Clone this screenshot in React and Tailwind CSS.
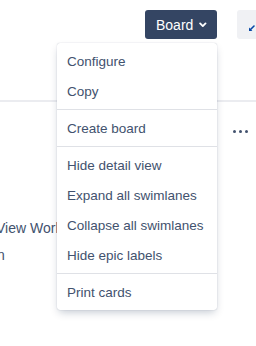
import React from "react";

const groups = [
  ["Configure", "Copy"],
  ["Create board"],
  ["Hide detail view", "Expand all swimlanes", "Collapse all swimlanes", "Hide epic labels"],
  ["Print cards"],
];

export default function App() {
  return (
    <div
      className="relative w-[256px] h-[346px] overflow-hidden bg-white text-[#42526e]"
      style={{ fontFamily: '"Liberation Sans", Arial, sans-serif' }}
    >
      <div className="flex items-start pt-[10px] pl-[145px]">
        <button className="flex items-center shrink-0 w-[72px] h-[29px] rounded-[3px] bg-[#344563] pl-[11px] pr-[10px] pt-[1px] text-white text-[14px]">
          <span className="leading-none">Board</span>
          <svg className="ml-[6px]" width="10" height="8" viewBox="0 0 10 8">
            <path d="M1.5 2 L5 5.5 L8.5 2" fill="none" stroke="white" strokeWidth="2.4" strokeLinecap="round" strokeLinejoin="round" />
          </svg>
        </button>
        <div className="ml-[20px] shrink-0 w-[32px] h-[29px] rounded-[3px] bg-[#f0f1f4] pl-[11px] pt-[15px]">
          <svg width="7" height="7" viewBox="0 0 7 7">
            <path d="M6 1 L1.8 5.2" stroke="#0747a6" strokeWidth="1.6" strokeLinecap="round" />
            <path d="M1 2.6 L1 6 L4.4 6 Z" fill="#0747a6" />
          </svg>
        </div>
      </div>

      <div className="mt-[61px] border-t-2 border-[#ebecf0]" />

      <div className="flex justify-end gap-[3px] pr-[8px] mt-[28px]">
        <span className="w-[3px] h-[3px] rounded-full bg-[#42526e]" />
        <span className="w-[3px] h-[3px] rounded-full bg-[#42526e]" />
        <span className="w-[3px] h-[3px] rounded-full bg-[#42526e]" />
      </div>

      <div className="mt-[87px] w-[57px] overflow-hidden">
        <div className="-ml-[4px] text-[14px] leading-[16px] whitespace-nowrap">View Workflow</div>
      </div>
      <div className="mt-[11px] w-[57px] overflow-hidden">
        <div className="-ml-[3px] text-[14px] leading-[16px]">n</div>
      </div>

      <div className="absolute left-[57px] top-[43px] w-[160px] rounded-[3px] bg-white shadow-[0_4px_8px_-2px_rgba(9,30,66,0.25),0_0_1px_rgba(9,30,66,0.31)]">
        {groups.map((g, i) => (
          <div key={i} className={`py-[3px] ${i > 0 ? "border-t border-[#dfe1e6]" : ""}`}>
            {g.map((t) => (
              <div key={t} className="h-[30px] flex items-center pl-[10px] pt-[2px] text-[13.5px] text-[#42526e] whitespace-nowrap">
                {t}
              </div>
            ))}
          </div>
        ))}
      </div>
    </div>
  );
}
